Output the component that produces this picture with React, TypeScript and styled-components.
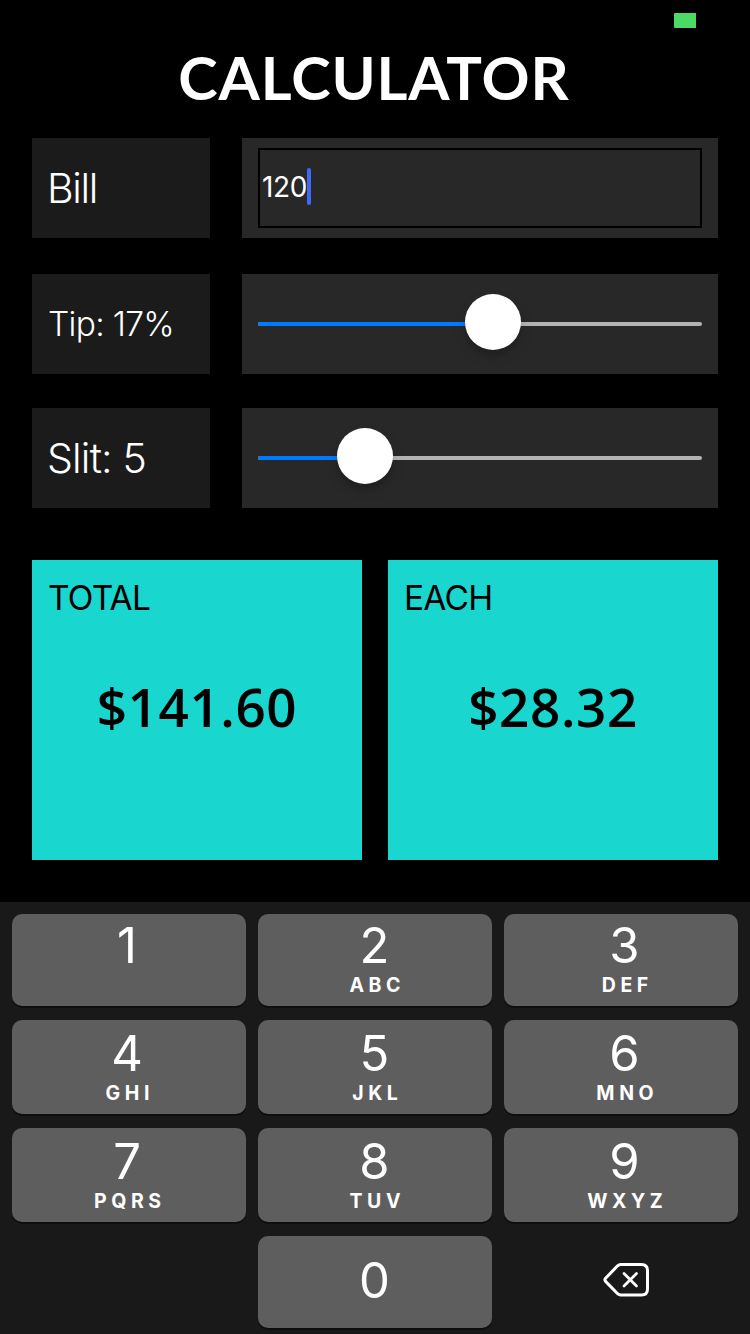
import React, { useState } from "react";
import styled, { createGlobalStyle } from "styled-components";

const GlobalStyle = createGlobalStyle`
  * { box-sizing: border-box; }
  body {
    margin: 0;
    background: #000;
    font-family: Inter, "Liberation Sans", sans-serif;
    -webkit-font-smoothing: antialiased;
  }
`;

const Screen = styled.div`
  display: flex;
  flex-direction: column;
  width: 750px;
  height: 1334px;
  overflow: hidden;
  background: #000;
  color: #fff;
`;

const StatusBar = styled.div`
  display: flex;
  justify-content: flex-end;
  align-items: flex-start;
  height: 40px;
  padding: 13px 54px 0 0;
`;

const Battery = styled.div`
  width: 22px;
  height: 15px;
  border-radius: 1px 0 0 1px;
  background: #4cd964;
`;

const Title = styled.h1`
  height: 98px;
  margin: 0;
  padding-right: 2px;
  font: 700 59.5px/74px Lato, sans-serif;
  letter-spacing: 0.9px;
  text-align: center;
`;

const Form = styled.div`
  display: flex;
  flex-direction: column;
  padding: 0 32px;
`;

const Row = styled.div<{ $gap: number }>`
  display: grid;
  grid-template-columns: 178px 476px;
  column-gap: 32px;
  height: 100px;
  margin-bottom: ${(p) => p.$gap}px;
`;

const Label = styled.div<{ $size: number; $spacing: number }>`
  padding-left: ${(p) => (p.$size > 40 ? 15 : 16)}px;
  background: #1b1b1b;
  font-size: ${(p) => p.$size}px;
  font-weight: 300;
  line-height: 101px;
  height: 100px;
  letter-spacing: ${(p) => p.$spacing}px;
  white-space: nowrap;
`;

const Panel = styled.div`
  display: flex;
  align-items: center;
  padding: 0 16px;
  background: #282828;
`;

const Field = styled.div`
  display: flex;
  align-items: center;
  width: 444px;
  height: 80px;
  padding: 0 2px 3px;
  border: 2px solid #000;
`;

const Value = styled.span`
  padding-top: 1px;
  font-size: 28px;
  line-height: 40px;
  letter-spacing: -0.4px;
`;

const Caret = styled.span`
  width: 4px;
  height: 37px;
  border-radius: 2px;
  background: #3f6af5;
`;

const Track = styled.div`
  position: relative;
  width: 444px;
  height: 4px;
  border-radius: 2px;
  background: #b3b3b3;
`;

const Fill = styled.div`
  height: 4px;
  border-radius: 2px;
  background: #007aff;
`;

const Thumb = styled.div`
  position: absolute;
  top: -28px;
  width: 56px;
  height: 56px;
  border-radius: 50%;
  background: #fff;
  box-shadow: 0 6px 13px rgba(0, 0, 0, 0.15), 0 6px 2px rgba(0, 0, 0, 0.06);
`;

const Results = styled.div`
  display: grid;
  grid-template-columns: 330px 330px;
  column-gap: 26px;
  height: 300px;
`;

const Card = styled.div`
  display: flex;
  flex-direction: column;
  padding: 18px 16px 0;
  background: #19d6cf;
  color: #000;
`;

const CardTitle = styled.div`
  font-size: 33.5px;
  line-height: 40px;
  letter-spacing: -0.8px;
`;

const Amount = styled.div`
  margin-top: 59px;
  font: 600 53px/60px "Open Sans", sans-serif;
  letter-spacing: 0.6px;
  text-align: center;
`;

const Keyboard = styled.div`
  display: grid;
  grid-template-columns: repeat(3, 234px);
  grid-template-rows: 92px 94px 94px 92px;
  gap: 14px 12px;
  height: 432px;
  margin-top: 42px;
  padding: 12px;
  background: #191919;
`;

const KEY_INSETS = ["0 4px 0 0", "0 1px 0 0", "0 0 0 7px"];

const Key = styled.button<{ $top: number; $column: number }>`
  grid-column: ${(p) => p.$column + 1};
  display: flex;
  flex-direction: column;
  align-items: center;
  padding: ${(p) => KEY_INSETS[p.$column]};
  padding-top: ${(p) => p.$top}px;
  border: 0;
  border-radius: 10px;
  background: #5e5e5e;
  box-shadow: 0 2px 0 #0e0e0e;
  color: #fff;
  font-family: inherit;
`;

const Digit = styled.span`
  font-size: 49px;
  line-height: 50px;
`;

const Letters = styled.span`
  margin: -1px -4.6px 0 1px;
  font-size: 19.5px;
  font-weight: 700;
  line-height: 30px;
  letter-spacing: 4.6px;
`;

const DeleteKey = styled.button`
  grid-column: 3;
  display: flex;
  justify-content: center;
  align-items: center;
  padding: 0 0 4px 10px;
  border: 0;
  background: none;
`;

const KEYS = [
  { digit: "1", letters: "" },
  { digit: "2", letters: "ABC" },
  { digit: "3", letters: "DEF" },
  { digit: "4", letters: "GHI" },
  { digit: "5", letters: "JKL" },
  { digit: "6", letters: "MNO" },
  { digit: "7", letters: "PQRS" },
  { digit: "8", letters: "TUV" },
  { digit: "9", letters: "WXYZ" },
];

function Slider({ position }: { position: number }) {
  return (
    <Track>
      <Fill style={{ width: position }} />
      <Thumb style={{ left: position - 28 }} />
    </Track>
  );
}

function DeleteIcon() {
  return (
    <svg width="48" height="36" viewBox="0 0 48 36" fill="none" stroke="#fff" strokeLinecap="round" strokeLinejoin="round">
      <path
        d="M18.6 2.5H39.5Q45.5 2.5 45.5 8.5V27Q45.5 33 39.5 33H18.6Q17 33 15.6 31.7L3.6 19.4Q2.2 17.8 3.6 16.2L15.6 3.8Q17 2.5 18.6 2.5Z"
        strokeWidth="3"
      />
      <path d="M22 11.5L34.5 24M34.5 11.5L22 24" strokeWidth="2.8" />
    </svg>
  );
}

export default function App() {
  const [bill, setBill] = useState("120");
  const tip = 17;
  const people = 5;
  const total = Number(bill) * 1.18;
  const press = (d: string) => setBill((b) => b + d);

  return (
    <>
      <GlobalStyle />
      <Screen>
        <StatusBar>
          <Battery />
        </StatusBar>
        <Title>CALCULATOR</Title>
        <Form>
          <Row $gap={36}>
            <Label $size={41} $spacing={-1.3}>Bill</Label>
            <Panel>
              <Field>
                <Value>{bill}</Value>
                <Caret />
              </Field>
            </Panel>
          </Row>
          <Row $gap={34}>
            <Label $size={33.5} $spacing={-0.7}>{`Tip: ${tip}%`}</Label>
            <Panel>
              <Slider position={235} />
            </Panel>
          </Row>
          <Row $gap={52}>
            <Label $size={41} $spacing={-0.8}>{`Slit: ${people}`}</Label>
            <Panel>
              <Slider position={107} />
            </Panel>
          </Row>
          <Results>
            <Card>
              <CardTitle>TOTAL</CardTitle>
              <Amount>{`$${total.toFixed(2)}`}</Amount>
            </Card>
            <Card>
              <CardTitle>EACH</CardTitle>
              <Amount>{`$${(total / people).toFixed(2)}`}</Amount>
            </Card>
          </Results>
        </Form>
        <Keyboard>
          {KEYS.map((k, i) => (
            <Key key={k.digit} $column={i % 3} $top={i < 3 ? 7 : 9} onClick={() => press(k.digit)}>
              <Digit>{k.digit}</Digit>
              {k.letters && <Letters>{k.letters}</Letters>}
            </Key>
          ))}
          <Key $column={1} $top={20} onClick={() => press("0")}>
            <Digit>0</Digit>
          </Key>
          <DeleteKey aria-label="Delete" onClick={() => setBill((b) => b.slice(0, -1))}>
            <DeleteIcon />
          </DeleteKey>
        </Keyboard>
      </Screen>
    </>
  );
}
